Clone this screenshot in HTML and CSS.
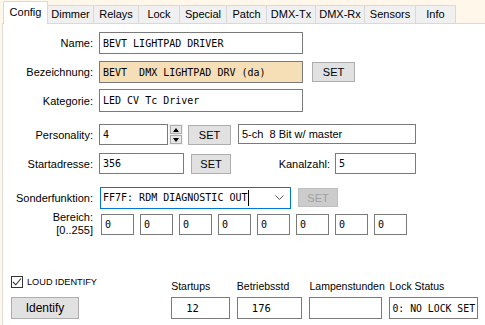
FILE: index.html
```html
<!DOCTYPE html>
<html lang="de">
<head>
    <meta charset="UTF-8">
    <title>RDM Config</title>
    <link rel="stylesheet" href="styles.css">
</head>
<body>
    <div class="tabs">
        <div class="tab active">Config</div>
        <div class="tab">Dimmer</div>
        <div class="tab">Relays</div>
        <div class="tab">Lock</div>
        <div class="tab">Special</div>
        <div class="tab">Patch</div>
        <div class="tab">DMX-Tx</div>
        <div class="tab">DMX-Rx</div>
        <div class="tab">Sensors</div>
        <div class="tab">Info</div>
    </div>

    <div class="panel">
        <div class="row r-name">
            <label class="lbl">Name:</label>
            <div class="field w-wide">BEVT LIGHTPAD DRIVER</div>
        </div>

        <div class="row r-bez">
            <label class="lbl">Bezeichnung:</label>
            <div class="field w-wide highlight">BEVT  DMX LIGHTPAD DRV (da)</div>
            <button class="btn btn-set gap-9">SET</button>
        </div>

        <div class="row r-kat">
            <label class="lbl">Kategorie:</label>
            <div class="field w-wide">LED CV Tc Driver</div>
        </div>

        <div class="row r-pers">
            <label class="lbl">Personality:</label>
            <div class="field w-pers">4</div>
            <div class="spinner">
                <span class="spin up"></span>
                <span class="spin down"></span>
            </div>
            <button class="btn btn-set gap-5">SET</button>
            <div class="field w-desc plain">5-ch  8 Bit w/ master</div>
        </div>

        <div class="row r-start">
            <label class="lbl">Startadresse:</label>
            <div class="field w-start">356</div>
            <button class="btn btn-set gap-7">SET</button>
            <label class="lbl lbl-kanal">Kanalzahl:</label>
            <div class="field w-kanal">5</div>
        </div>

        <div class="row r-sonder">
            <label class="lbl">Sonderfunktion:</label>
            <div class="combo">
                <span class="combo-text">FF7F: RDM DIAGNOSTIC OUT</span>
                <svg class="chevron" width="9" height="6" viewBox="0 0 9 6">
                    <polyline points="0.5,0.5 4.5,4.5 8.5,0.5" fill="none" stroke="#555" stroke-width="1"/>
                </svg>
            </div>
            <button class="btn btn-set btn-disabled" disabled>SET</button>
        </div>

        <div class="row r-bereich">
            <label class="lbl lbl-two">Bereich:<br>[0..255]</label>
            <div class="range-boxes">
                <div class="field box">0</div>
                <div class="field box">0</div>
                <div class="field box">0</div>
                <div class="field box">0</div>
                <div class="field box">0</div>
                <div class="field box">0</div>
                <div class="field box">0</div>
                <div class="field box">0</div>
            </div>
        </div>

        <div class="bottom">
            <div class="ident">
                <div class="check">
                    <span class="checkbox">
                        <svg width="10" height="10" viewBox="0 0 10 10">
                            <polyline points="1,5 3.8,7.8 9,1.5" fill="none" stroke="#333" stroke-width="1.1"/>
                        </svg>
                    </span>
                    <span class="check-text">LOUD IDENTIFY</span>
                </div>
                <button class="btn btn-ident">Identify</button>
            </div>
            <div class="stat s-startups">
                <div class="stat-label">Startups</div>
                <div class="field stat-box num">12</div>
            </div>
            <div class="stat s-betrieb">
                <div class="stat-label">Betriebsstd</div>
                <div class="field stat-box num">176</div>
            </div>
            <div class="stat s-lampen">
                <div class="stat-label">Lampenstunden</div>
                <div class="field stat-box"></div>
            </div>
            <div class="stat s-lock">
                <div class="stat-label">Lock Status</div>
                <div class="field stat-box tight">0: NO LOCK SET</div>
            </div>
        </div>
    </div>
</body>
</html>
```

FILE: styles.css
```css
body {
    margin: 0;
    background-color: #fff8ea;
    font-family: "Liberation Sans", Arial, sans-serif;
    font-size: 11px;
    color: #000;
    width: 485px;
    height: 325px;
    overflow: hidden;
}

/* tab strip */
.tabs {
    display: grid;
    grid-template-columns: 45px 46px 45px 41px 47px 40px 49px 49px 51px 40px;
    height: 23px;
    padding-left: 3px;
    align-items: end;
}

.tab {
    height: 17px;
    line-height: 17px;
    background-color: #f0f0f0;
    border: 1px solid #d9d9d9;
    border-bottom: none;
    border-left: none;
    text-align: center;
    color: #000;
}

.tab.active {
    height: 22px;
    line-height: 20px;
    background-color: #fff;
    border-left: 1px solid #d9d9d9;
    position: relative;
    z-index: 2;
    margin-bottom: -1px;
}

/* panel */
.panel {
    margin-left: 2px;
    height: 302px;
    background-color: #fff;
    border-top: 1px solid #d9d9d9;
    border-left: 1px solid #dcdcdc;
    padding-top: 8px;
}

.row {
    display: flex;
    align-items: center;
    height: 22px;
}

.r-bez { margin-top: 7px; }
.r-kat { margin-top: 6px; height: 23px; }
.r-pers { margin-top: 12px; height: 21px; }
.r-start { margin-top: 8px; height: 21px; }
.r-sonder { margin-top: 12px; height: 23px; }
.r-bereich { margin-top: 4px; height: 24px; align-items: flex-start; }

.lbl {
    width: 90px;
    margin-right: 6px;
    text-align: right;
    white-space: nowrap;
}

.lbl-two {
    line-height: 13px;
    margin-top: -2px;
    margin-right: 8px;
}

.lbl-kanal {
    width: 99px;
    margin-right: 5px;
}

.field {
    box-sizing: border-box;
    height: 100%;
    border: 1px solid #7a7a7a;
    background-color: #fff;
    font-family: "DejaVu Sans Mono", "Liberation Mono", monospace;
    font-size: 10px;
    padding-left: 3px;
    display: flex;
    align-items: center;
    white-space: pre;
    overflow: hidden;
}

.field.plain {
    font-family: "Liberation Sans", Arial, sans-serif;
    font-size: 11px;
}

.highlight {
    background-color: #f6dfb6;
}

.w-wide { width: 204px; }
.w-pers { width: 69px; }
.w-desc { width: 178px; margin-left: 7px; height: 20px; margin-top: -2px; }
.w-start { width: 85px; }
.w-kanal { width: 81px; }

/* buttons */
.btn {
    box-sizing: border-box;
    background-color: #e1e1e1;
    border: 1px solid #adadad;
    font-family: "Liberation Sans", Arial, sans-serif;
    font-size: 11px;
    color: #000;
    padding: 0;
}

.btn-set {
    width: 43px;
    height: 20px;
}

.gap-9 { margin-left: 9px; }
.gap-5 { margin-left: 5px; }
.gap-7 { margin-left: 7px; width: 40px; }

.btn-disabled {
    background-color: #cccccc;
    border-color: #bfbfbf;
    color: #a0a0a0;
    width: 40px;
    height: 19px;
    margin-left: 7px;
}

/* spinner */
.spinner {
    display: flex;
    flex-direction: column;
    width: 14px;
    height: 21px;
    margin-left: 1px;
    background-color: #f0f0f0;
}

.spin {
    box-sizing: border-box;
    flex: 1;
    margin: 1px 1px 0 1px;
    border: 1px solid #acacac;
    background-color: #e5e5e5;
    position: relative;
}

.spin.down {
    margin-bottom: 1px;
}

.spin::after {
    content: "";
    position: absolute;
    left: 2px;
    top: 2px;
    border-left: 3px solid transparent;
    border-right: 3px solid transparent;
}

.spin.up::after {
    border-bottom: 4px solid #000;
}

.spin.down::after {
    border-top: 4px solid #000;
}

/* combo box */
.combo {
    box-sizing: border-box;
    width: 191px;
    height: 22px;
    margin-left: 1px;
    border: 1px solid #0078d7;
    background-color: #fff;
    display: flex;
    align-items: center;
    padding-left: 2px;
    font-family: "DejaVu Sans Mono", "Liberation Mono", monospace;
    font-size: 10px;
}

.combo-text {
    border-right: 1px solid #000;
    line-height: 16px;
    white-space: pre;
}

.chevron {
    margin-left: auto;
    margin-right: 6px;
}

/* range boxes */
.range-boxes {
    display: flex;
    gap: 6px;
    height: 21px;
    margin-top: 1px;
}

.box {
    width: 33px;
}

/* bottom area */
.bottom {
    display: flex;
    align-items: flex-end;
    margin-top: 39px;
    padding-left: 8px;
}

.ident {
    width: 161px;
    display: flex;
    flex-direction: column;
}

.check {
    display: flex;
    align-items: center;
    height: 12px;
}

.checkbox {
    box-sizing: border-box;
    width: 12px;
    height: 12px;
    border: 1px solid #333;
    background-color: #fff;
    display: flex;
    align-items: center;
    justify-content: center;
}

.check-text {
    font-size: 9.2px;
    margin-left: 4px;
}

.btn-ident {
    margin-top: 9px;
    width: 68px;
    height: 22px;
    font-size: 12px;
}

.stat {
    display: flex;
    flex-direction: column;
    margin-right: 7px;
}

.stat-label {
    height: 15px;
    font-size: 10.5px;
    white-space: nowrap;
    margin-bottom: 2px;
}

.stat-box {
    height: 22px;
}

.stat-box.num {
    padding-left: 14px;
    font-size: 10.5px;
}

.stat-box.tight {
    padding-left: 2px;
    font-size: 9.8px;
}

.s-startups { width: 59px; }
.s-betrieb { width: 66px; }
.s-lampen { width: 73px; }
.s-lock { width: 89px; }
```
